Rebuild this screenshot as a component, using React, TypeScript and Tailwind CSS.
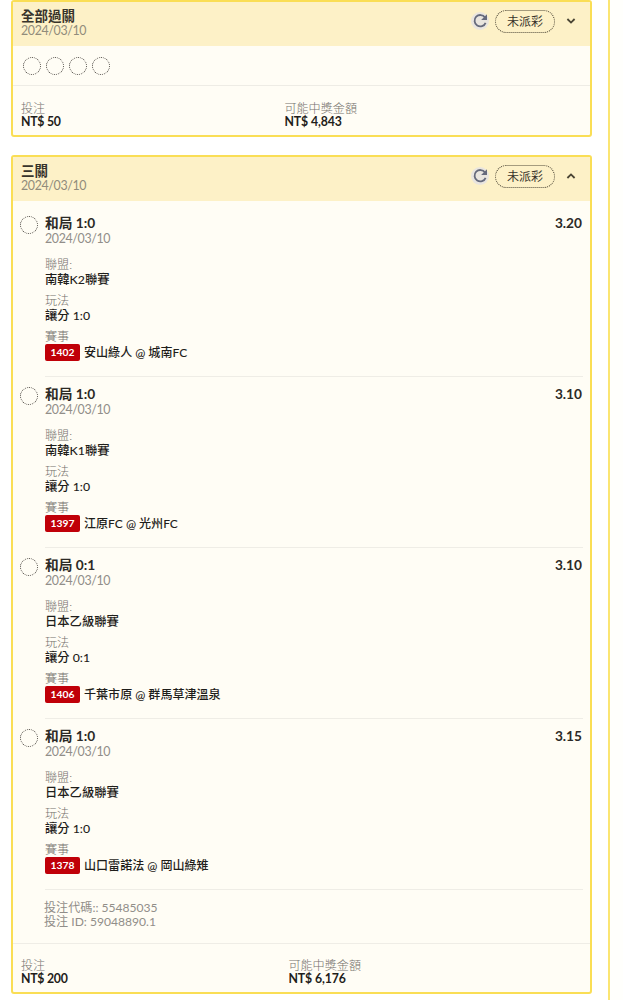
import React from 'react';

type Leg = {
  pick: string;
  odds: string;
  league: string;
  play: string;
  code: string;
  match: string;
};

const legs: Leg[] = [
  { pick: '和局 1:0', odds: '3.20', league: '南韓K2聯賽', play: '讓分 1:0', code: '1402', match: '安山綠人 @ 城南FC' },
  { pick: '和局 1:0', odds: '3.10', league: '南韓K1聯賽', play: '讓分 1:0', code: '1397', match: '江原FC @ 光州FC' },
  { pick: '和局 0:1', odds: '3.10', league: '日本乙級聯賽', play: '讓分 0:1', code: '1406', match: '千葉市原 @ 群馬草津溫泉' },
  { pick: '和局 1:0', odds: '3.15', league: '日本乙級聯賽', play: '讓分 1:0', code: '1378', match: '山口雷諾法 @ 岡山綠雉' },
];

function Dot() {
  return <span className="block size-[18px] shrink-0 rounded-full border border-dotted border-[#45413c]" />;
}

function RefreshIcon() {
  return (
    <span className="flex size-[18px] items-center justify-center rounded-full bg-[#e9e5df]">
      <svg width="16" height="16" viewBox="0 0 16 16" fill="none">
        <path d="M13 4.5A5.7 5.7 0 1 0 13.6 9.8" stroke="#666a7c" strokeWidth="1.8" />
        <path d="M15 1.2v5.9H9.1z" fill="#666a7c" />
      </svg>
    </span>
  );
}

function CardHeader({ title, open }: { title: string; open: boolean }) {
  return (
    <div className="flex h-11 shrink-0 justify-between bg-[#fdf1c7] pl-2 pr-[14px]">
      <div className="flex flex-col pt-[6px]">
        <span className="h-4 text-[13.5px] font-semibold leading-4 text-[#38342b]">{title}</span>
        <span className="h-[14px] text-[12.4px] leading-[14px] tracking-[-0.35px] text-[#918c7b]">2024/03/10</span>
      </div>
      <div className="flex h-[37px] items-center">
        <RefreshIcon />
        <span className="ml-[6px] mt-px flex h-[23px] w-[60px] items-center justify-center rounded-full border border-dotted border-[#4e4837] pt-[2px] text-[12px] leading-none text-[#38342b]">
          未派彩
        </span>
        <svg className="ml-[11px] mt-px" width="10" height="8" viewBox="0 0 10 8" fill="none">
          <path d={open ? 'M1.4 6 5 2.4 8.6 6' : 'M1.4 2 5 5.6 8.6 2'} stroke="#4a4534" strokeWidth="1.8" />
        </svg>
      </div>
    </div>
  );
}

function Label({ children }: { children: React.ReactNode }) {
  return <div className="h-[14px] text-[12.1px] font-light leading-[14px] text-[#75726d]">{children}</div>;
}

function Value({ children }: { children: React.ReactNode }) {
  return <div className="h-[15px] text-[12.3px] font-medium leading-[15px] text-[#1f1e1b]">{children}</div>;
}

function LegRow({ leg }: { leg: Leg }) {
  return (
    <div className="flex h-[171px] pl-[7px] pr-[7px]">
      <div className="w-[25px] shrink-0 pt-[10px]">
        <Dot />
      </div>
      <div className="flex-1 border-b border-[#efede6] pt-[9px]">
        <div className="flex h-4 justify-between text-[13.7px] font-bold leading-4 text-[#2c2a26]">
          <span>{leg.pick}</span>
          <span className="pr-px">{leg.odds}</span>
        </div>
        <div className="h-[14px] pt-px text-[12.4px] leading-[14px] tracking-[-0.35px] text-[#918e89]">2024/03/10</div>
        <div className="mt-[13px]">
          <Label>聯盟:</Label>
          <Value>{leg.league}</Value>
        </div>
        <div className="mt-[7px]">
          <Label>玩法</Label>
          <Value>{leg.play}</Value>
        </div>
        <div className="mt-[7px]">
          <Label>賽事</Label>
          <div className="flex h-[17px] items-center">
            <span className="flex h-[17px] w-[35px] items-center justify-center rounded-[2px] bg-[#c00008] text-[10.3px] font-bold leading-none text-white">
              {leg.code}
            </span>
            <span className="ml-1 text-[12.05px] font-medium leading-[17px] text-[#1f1e1b]">{leg.match}</span>
          </div>
        </div>
      </div>
    </div>
  );
}

function Totals({ stake, payout }: { stake: string; payout: string }) {
  return (
    <>
      <div className="flex-1">
        <div className="text-[12.1px] font-light leading-[13px] text-[#75726d]">投注</div>
        <div className="text-[12.3px] font-bold leading-[13px] tracking-[-0.25px] text-[#1f1e1b]">{stake}</div>
      </div>
      <div>
        <div className="text-[12.1px] font-light leading-[13px] text-[#75726d]">可能中獎金額</div>
        <div className="text-[12.3px] font-bold leading-[13px] tracking-[-0.1px] text-[#1f1e1b]">{payout}</div>
      </div>
    </>
  );
}

export default function App() {
  return (
    <div className="flex h-[1000px] w-[623px] overflow-hidden bg-white font-['Lato','Noto_Sans_CJK_TC',sans-serif]">
      <div className="flex w-[610px] shrink-0 flex-col border-r-2 border-[#fbe572] pl-[11px] pr-4">
        <section className="flex h-[137px] w-[581px] shrink-0 flex-col overflow-hidden rounded-[3px] border-2 border-[#fade55] bg-[#fffdf5]">
          <CardHeader title="全部過關" open={false} />
          <div className="flex h-10 items-center gap-[5px] border-b border-[#eeece5] pl-[10px]">
            <Dot />
            <Dot />
            <Dot />
            <Dot />
          </div>
          <div className="flex pl-2 pr-[233px] pt-4">
            <Totals stake="NT$ 50" payout="NT$ 4,843" />
          </div>
        </section>

        <section className="mt-[18px] flex h-[839px] w-[581px] shrink-0 flex-col overflow-hidden rounded-[3px] border-2 border-[#fade55] bg-[#fffdf5]">
          <CardHeader title="三關" open />
          <div className="pt-[5px]">
            {legs.map((leg) => (
              <LegRow key={leg.code} leg={leg} />
            ))}
          </div>
          <div className="h-[54px] border-b border-[#efede6] pl-[31px] pt-[11px] text-[12.1px] leading-[13.5px] text-[#918e89]">
            <div>投注代碼:: 55485035</div>
            <div>投注 ID: 59048890.1</div>
          </div>
          <div className="flex pl-2 pr-[229px] pt-[15px]">
            <Totals stake="NT$ 200" payout="NT$ 6,176" />
          </div>
        </section>
      </div>
      <div className="flex-1 bg-[#fffffc]" />
    </div>
  );
}
